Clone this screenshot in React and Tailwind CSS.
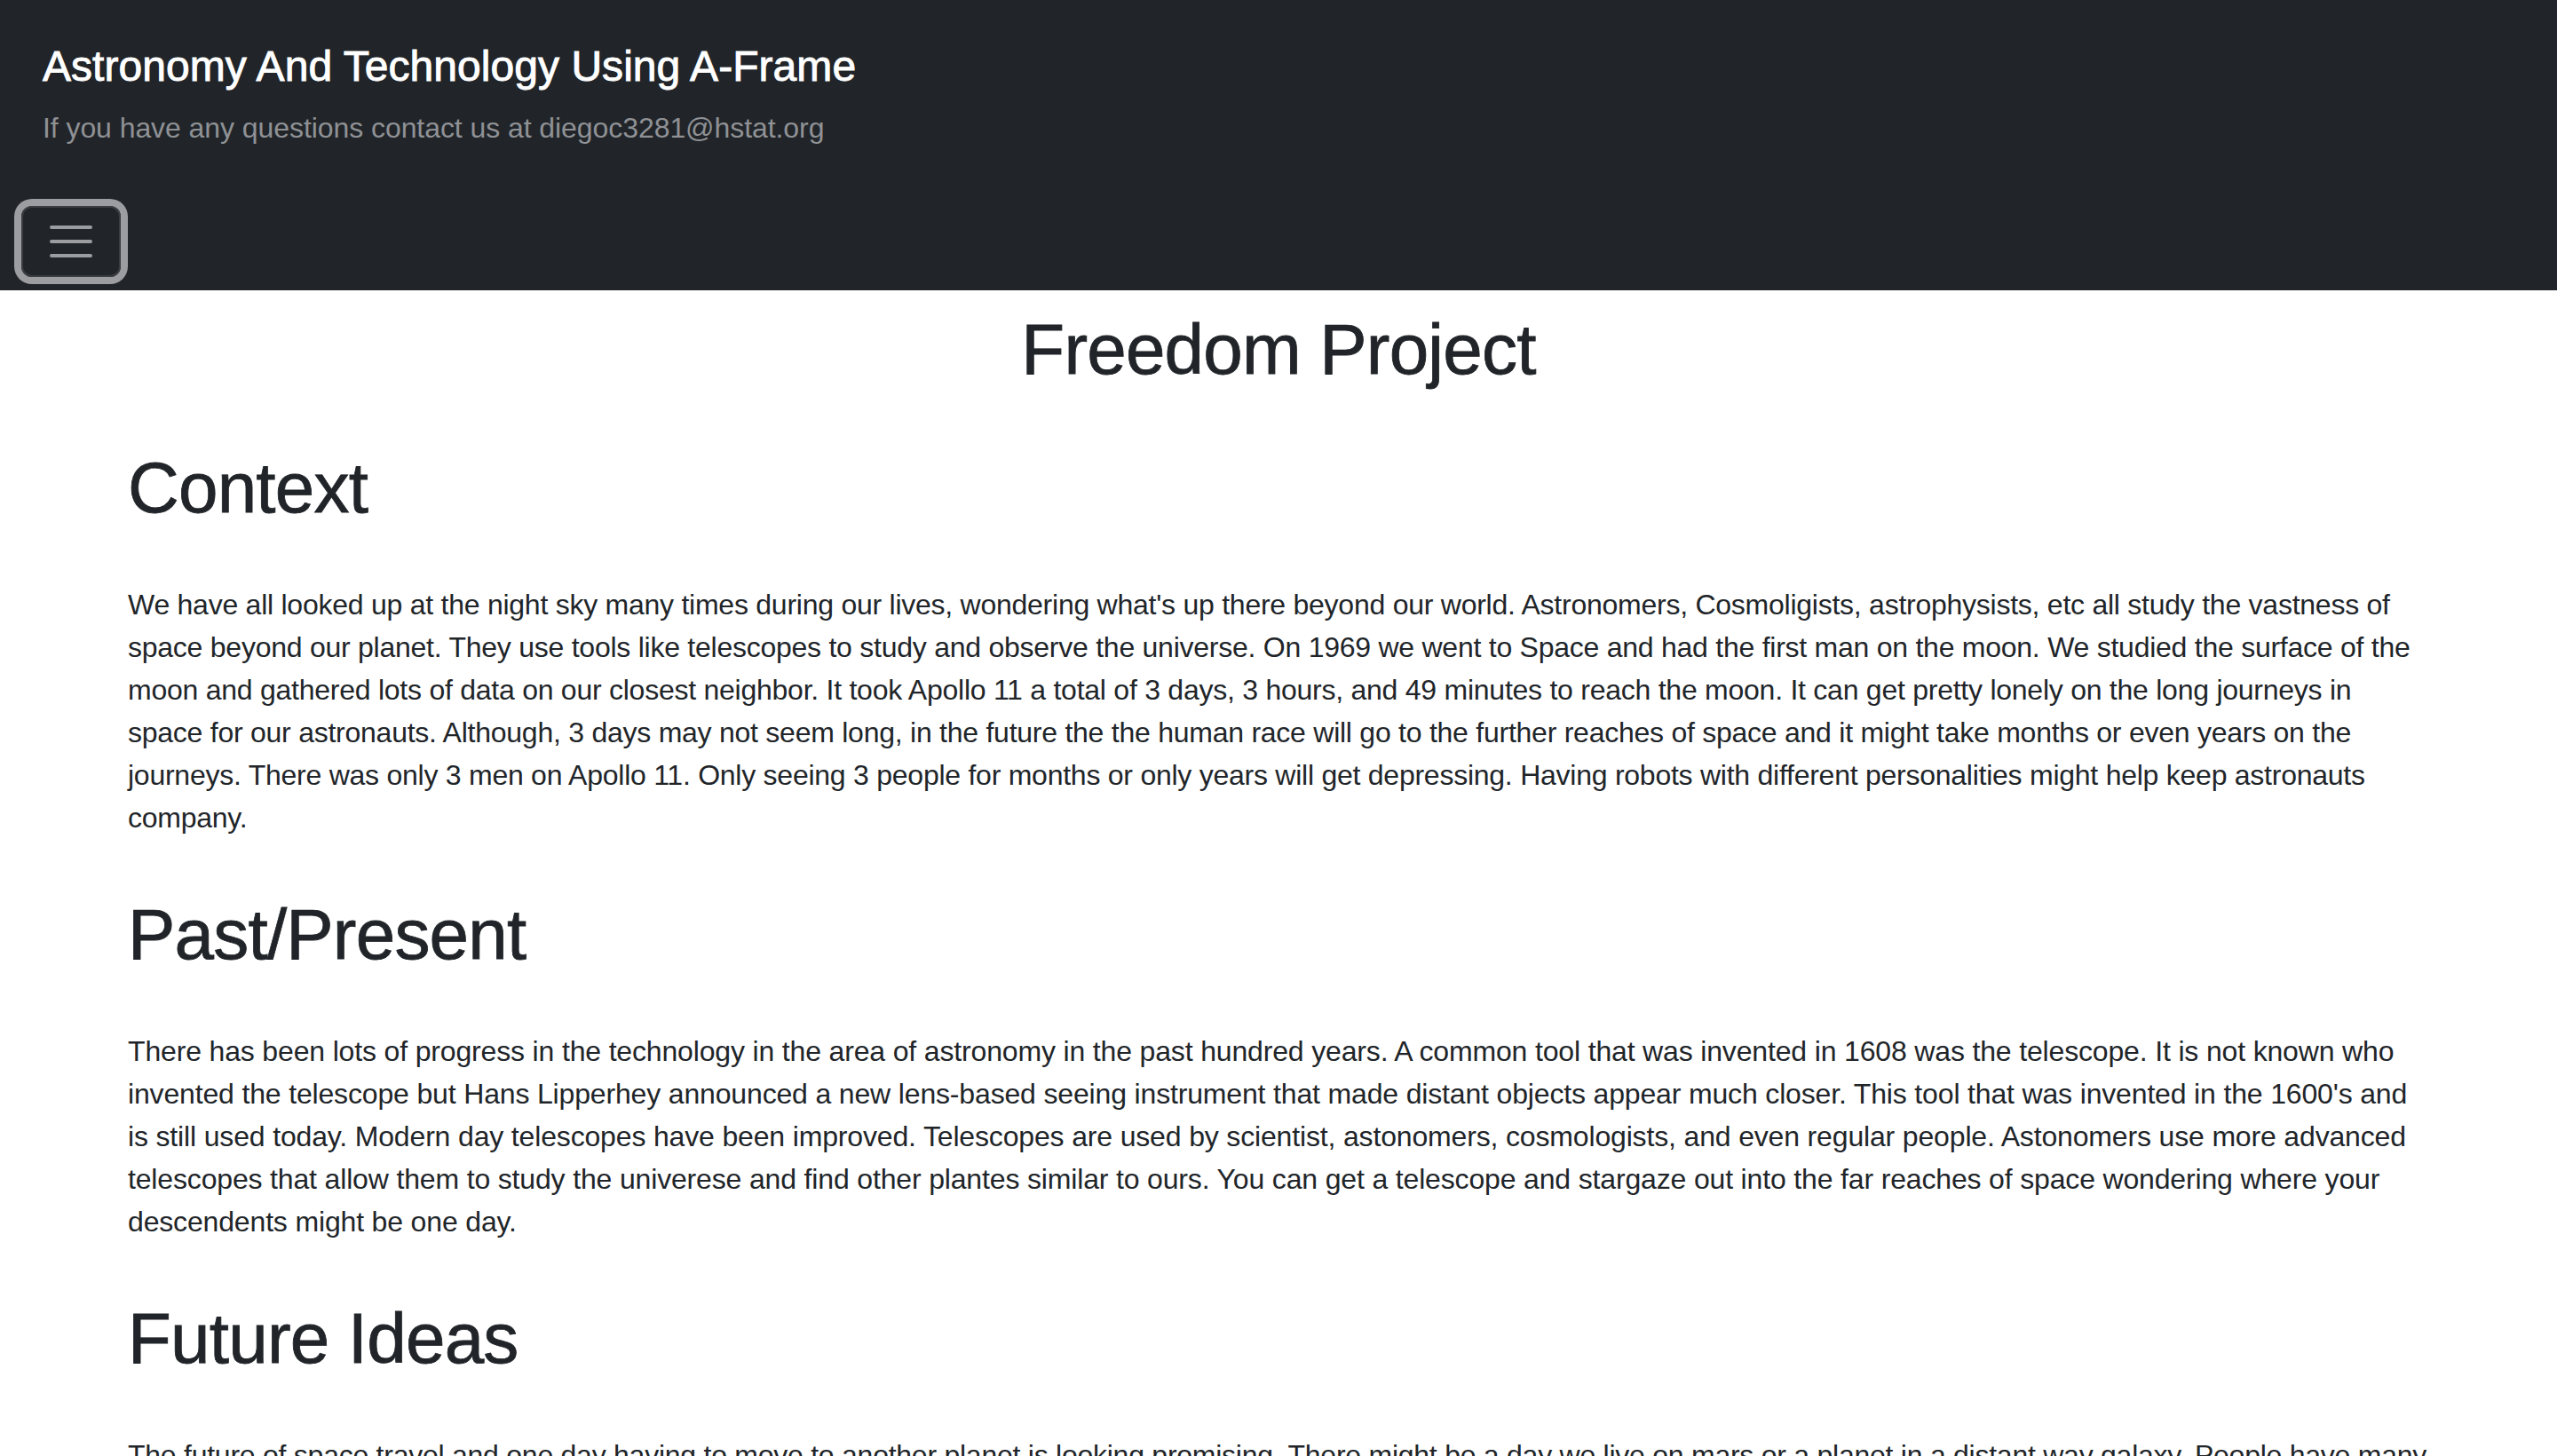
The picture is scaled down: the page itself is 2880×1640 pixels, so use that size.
export default function App() {
  const font = { fontFamily: '"Liberation Sans", Arial, sans-serif' };
  const h = "text-[80px] leading-[96px] font-medium tracking-[-0.8px] [-webkit-text-stroke:0.8px_#212529]";
  const p = "mt-[59px] text-[32px] leading-[48px] tracking-[-0.25px]";
  const p2 = "mt-[59px] text-[32px] leading-[48px] tracking-[-0.16px]";
  return (
    <div className="min-h-screen bg-white text-[#212529]" style={font}>
      <header className="bg-[#212529] h-[327px] overflow-hidden">
        <div className="pl-[48px] pt-[46px]">
          <div className="text-[48px] leading-[58px] font-medium text-white tracking-[0.05px] [-webkit-text-stroke:0.9px_white]">
            Astronomy And Technology Using A-Frame
          </div>
          <div className="mt-[16px] text-[32px] leading-[48px] text-[#8f9195] tracking-[-0.07px]">
            If you have any questions contact us at diegoc3281@hstat.org
          </div>
        </div>
        <button className="ml-[24px] mt-[64px] w-[112px] h-[80px] flex items-center justify-center border-2 border-[#3a3d41] rounded-[12px] ring-[8px] ring-[#9c9da0]">
          <svg width="60" height="60" viewBox="0 0 30 30">
            <path d="M4 7h22M4 15h22M4 23h22" stroke="#9c9da0" strokeWidth="2" strokeLinecap="round" />
          </svg>
        </button>
      </header>
      <main className="max-w-[2640px] mx-auto px-[24px]">
        <h1 className={"mt-[19px] text-center " + h}>Freedom Project</h1>
        <h2 className={"mt-[60px] " + h}>Context</h2>
        <p className={p}>
          We have all looked up at the night sky many times during our lives, wondering what's up there beyond our world. Astronomers, Cosmoligists, astrophysists, etc all study the vastness of space beyond our planet. They use tools like telescopes to study and observe the universe. On 1969 we went to Space and had the first man on the moon. We studied the surface of the moon and gathered lots of data on our closest neighbor. It took Apollo 11 a total of 3 days, 3 hours, and 49 minutes to reach the moon. It can get pretty lonely on the long journeys in space for our astronauts. Although, 3 days may not seem long, in the future the the human race will go to the further reaches of space and it might take months or even years on the journeys. There was only 3 men on Apollo 11. Only seeing 3 people for months or only years will get depressing. Having robots with different personalities might help keep astronauts company.
        </p>
        <h2 className={"mt-[60px] " + h}>Past/Present</h2>
        <p className={p2}>
          There has been lots of progress in the technology in the area of astronomy in the past hundred years. A common tool that was invented in 1608 was the telescope. It is not known who invented the telescope but Hans Lipperhey announced a new lens-based seeing instrument that made distant objects appear much closer. This tool that was invented in the 1600's and is still used today. Modern day telescopes have been improved. Telescopes are used by scientist, astonomers, cosmologists, and even regular people. Astonomers use more advanced telescopes that allow them to study the univerese and find other plantes similar to ours. You can get a telescope and stargaze out into the far reaches of space wondering where your descendents might be one day.
        </p>
        <h2 className={"mt-[60px] " + h}>Future Ideas</h2>
        <p className={p}>
          The future of space travel and one day having to move to another planet is looking promising. There might be a day we live on mars or a planet in a distant way galaxy. People have many ideas about what life might look like on other planets and how we will get there.
        </p>
      </main>
    </div>
  );
}
